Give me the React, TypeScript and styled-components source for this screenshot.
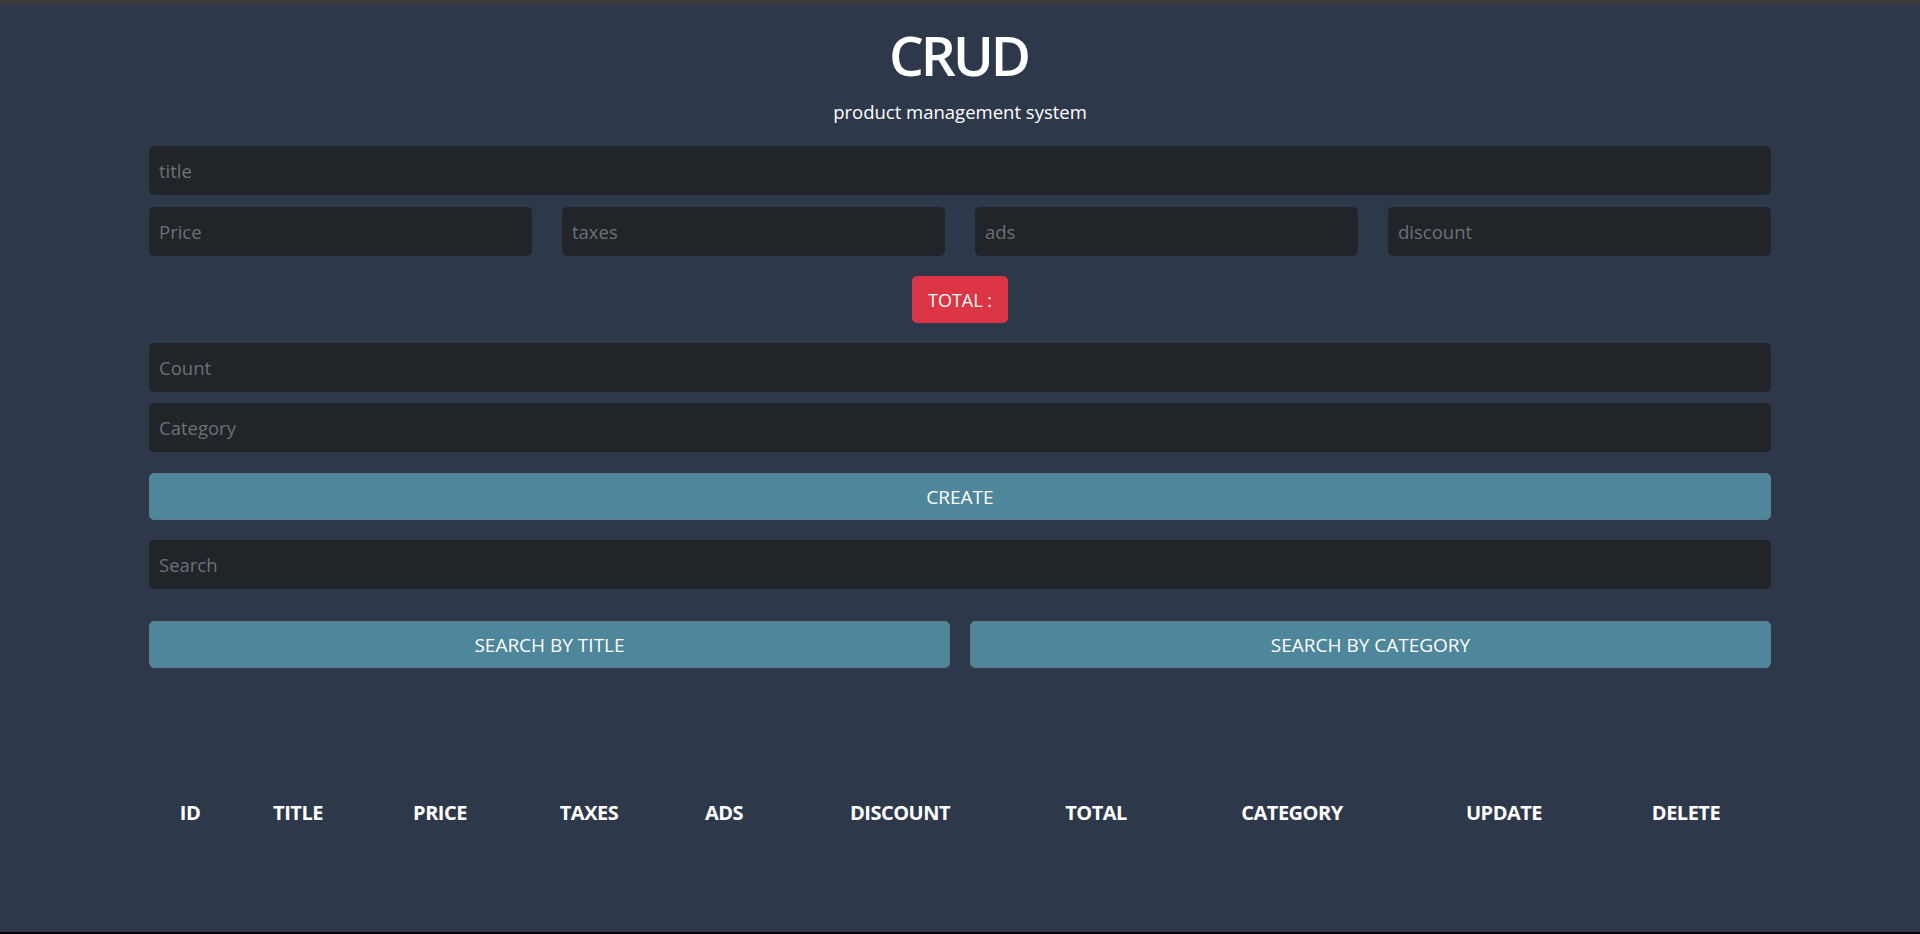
import React from "react";
import styled, { createGlobalStyle } from "styled-components";

const Global = createGlobalStyle`
  html, body { margin: 0; padding: 0; }
  body {
    background: #000;
    font-family: "Open Sans", "Noto Sans", sans-serif;
    color: #fff;
  }
  * { box-sizing: border-box; }
`;

const Page = styled.div`
  height: 932px;
  background: #2e384b;
  border-top: 5px solid #3c3c3c;
  overflow: hidden;
`;

const Container = styled.div`
  width: 1622px;
  margin: 0 auto;
  padding-top: 18px;
  display: flex;
  flex-direction: column;
`;

const Title = styled.h1`
  margin: 0;
  text-align: center;
  font-size: 55px;
  line-height: 64px;
  font-weight: 600;
  letter-spacing: -3px;
  text-indent: -3px;
`;

const Subtitle = styled.p`
  margin: 13px 0 0;
  text-align: center;
  font-size: 18.5px;
  line-height: 24px;
`;

const Field = styled.input<{ $mt?: number }>`
  display: block;
  width: 100%;
  height: 49px;
  margin-top: ${(p) => p.$mt ?? 0}px;
  padding: 0 10px;
  border: none;
  border-radius: 5px;
  background: #212429;
  color: #ddd;
  font-family: inherit;
  font-size: 18.5px;
  outline: none;
  &::placeholder { color: #6d7075; }
`;

const PriceRow = styled.div`
  display: grid;
  grid-template-columns: repeat(4, 1fr);
  gap: 30px;
  margin-top: 12px;
`;

const TotalWrap = styled.div`
  display: flex;
  justify-content: center;
  margin-top: 20px;
`;

const Total = styled.small`
  display: flex;
  align-items: center;
  justify-content: center;
  width: 96px;
  height: 47px;
  border-radius: 5px;
  background: #dc3545;
  color: #fff;
  font-size: 18px;
`;

const Button = styled.button<{ $mt?: number }>`
  display: block;
  width: 100%;
  height: 47px;
  margin-top: ${(p) => p.$mt ?? 0}px;
  border: 1px solid #5e7d8b;
  border-radius: 5px;
  background: #4e869c;
  color: #fff;
  font-family: inherit;
  font-size: 19px;
  text-transform: uppercase;
  cursor: pointer;
`;

const ButtonRow = styled.div`
  display: grid;
  grid-template-columns: 1fr 1fr;
  gap: 20px;
  margin-top: 32px;
`;

const Table = styled.table`
  width: 100%;
  margin-top: 130px;
  border-collapse: collapse;
  table-layout: fixed;
`;

const Th = styled.th`
  padding: 0;
  height: 28px;
  font-size: 20px;
  font-weight: 700;
  text-align: center;
  text-transform: uppercase;
  letter-spacing: -0.5px;
`;

const cols = [82, 134, 150, 148, 122, 230, 162, 230, 194, 170];
const heads = ["id", "title", "price", "taxes", "ads", "discount", "total", "category", "update", "delete"];

export default function App() {
  return (
    <>
      <Global />
      <Page>
        <Container>
          <Title>CRUD</Title>
          <Subtitle>product management system</Subtitle>
          <Field $mt={22} placeholder="title" />
          <PriceRow>
            <Field placeholder="Price" />
            <Field placeholder="taxes" />
            <Field placeholder="ads" />
            <Field placeholder="discount" />
          </PriceRow>
          <TotalWrap>
            <Total>TOTAL :</Total>
          </TotalWrap>
          <Field $mt={20} placeholder="Count" />
          <Field $mt={11} placeholder="Category" />
          <Button $mt={21}>create</Button>
          <Field $mt={20} placeholder="Search" />
          <ButtonRow>
            <Button>Search By Title</Button>
            <Button>Search By Category</Button>
          </ButtonRow>
          <Table>
            <colgroup>
              {cols.map((w, i) => (
                <col key={i} style={{ width: w }} />
              ))}
            </colgroup>
            <thead>
              <tr>
                {heads.map((h) => (
                  <Th key={h}>{h}</Th>
                ))}
              </tr>
            </thead>
            <tbody />
          </Table>
        </Container>
      </Page>
    </>
  );
}
